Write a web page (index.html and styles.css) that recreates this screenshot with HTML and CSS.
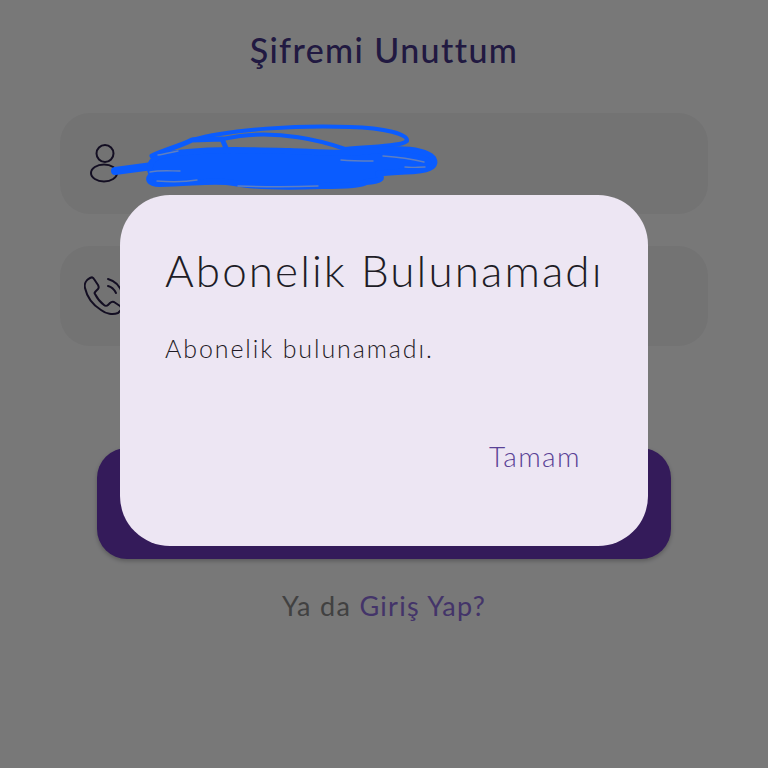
FILE: index.html
```html
<!DOCTYPE html>
<html lang="tr">
<head>
<meta charset="utf-8">
<title>Şifremi Unuttum</title>
<link rel="stylesheet" href="styles.css">
</head>
<body>
<main class="screen">
  <h1 class="heading">Şifremi Unuttum</h1>
  <div class="field field-first">
    <svg class="icon" viewBox="0 0 32 42" fill="none" stroke="#2a1f4a" stroke-width="2">
      <ellipse cx="15" cy="10.5" rx="8.5" ry="8.5"/>
      <ellipse cx="14" cy="30" rx="13" ry="8.5"/>
    </svg>
  </div>
  <div class="field field-second">
    <svg class="icon icon-phone" viewBox="0 0 40 42" fill="none" stroke="#2a1f4a" stroke-width="2" stroke-linecap="round" stroke-linejoin="round">
      <path d="M6 3 C2 5 0 9 1 13 C3 22 9 30 17 35 C22 39 29 40 34 38 L37 35 C38 33 37 32 36 31 L30 27 C28 26 27 27 26 28 L24 30 C23 31 21 31 20 30 C16 27 13 23 11 19 C10 18 11 17 12 16 L14 14 C15 13 15 12 14 10 L10 4 C9 2 8 2 6 3 Z"/>
      <path d="M24 4 C31 6 36 11 38 18"/>
      <path d="M24 11 C28 12 30 14 32 18"/>
    </svg>
  </div>
  <button class="submit" type="button"></button>
  <p class="switch">Ya da <a class="switch-link">Giriş Yap?</a></p>
  <div class="scrim"></div>
  <svg class="scribble" viewBox="100 120 350 75" fill="none" stroke-linecap="round" stroke-linejoin="round">
    <path class="ink" stroke-width="8" d="M115 171 L190 161"/>
    <path class="ink" stroke-width="4" d="M192 140 C230 129 300 125 350 127 C385 128 408 134 407 141 C400 147 370 146 345 149 C320 140 280 131 240 136 L222 139"/>
    <path class="ink" stroke-width="5" d="M152 156 C165 150 180 146 192 140 L222 139 L226 148"/>
    <path class="ink-fill" d="M188 152 C215 149 250 150 290 151 C320 152 345 155 380 150 C405 148 425 150 433 158 C437 165 432 170 415 171 C400 172 385 172 378 174 C384 178 381 181 366 182 C362 185 345 186 322 186 C295 187 255 187 234 183 C215 179 190 184 160 184 C148 184 147 178 152 175 C148 168 150 162 156 158 C165 153 178 153 188 152 Z"/>
    <path class="gap" stroke-width="1.4" d="M341 160 C352 161 362 161 373 161 M383 156 C398 157 412 159 424 162 M405 167 C412 168 418 167 425 167 M158 155 C165 154 172 152 178 151 M150 172 C160 170 170 171 180 171 M157 181 C170 182 185 182 197 180 M238 186 C265 187 295 187 318 186"/>
  </svg>
  <section class="dialog">
    <h2 class="dialog-title">Abonelik Bulunamadı</h2>
    <p class="dialog-text">Abonelik bulunamadı.</p>
    <div class="dialog-actions"><button class="dialog-ok" type="button">Tamam</button></div>
  </section>
</main>
</body>
</html>
```
FILE: styles.css
```css
* { box-sizing: border-box; }
html, body { margin: 0; height: 100%; }
body { background: #777777; font-family: "Lato", "Noto Sans", sans-serif; }
.screen {
  position: relative;
  width: 768px;
  height: 768px;
  overflow: hidden;
  display: flex;
  flex-direction: column;
  align-items: center;
  background: #fefeff;
}
.heading {
  margin: 26px 0 0;
  height: 48px;
  font-size: 34px;
  line-height: 48px;
  font-weight: 500;
  letter-spacing: 1.4px;
  color: #46368a;
}
.field {
  width: 648px;
  height: 101px;
  border-radius: 30px;
  background: #f4f4f4;
  display: flex;
  align-items: center;
  padding-left: 30px;
}
.field-first { margin-top: 39px; }
.field-second { margin-top: 32px; height: 100px; padding-left: 24px; }
.icon { width: 32px; height: 42px; }
.icon-phone { width: 40px; height: 42px; }
.submit {
  margin-top: 102px;
  width: 574px;
  height: 111px;
  border: 0;
  border-radius: 30px;
  background: #6f3ac0;
  box-shadow: 0 2px 4px rgba(0,0,0,0.25);
}
.switch {
  margin: 31px 0 0;
  font-size: 27px;
  line-height: 32px;
  letter-spacing: 1.3px;
  color: #8a8a8a;
}
.switch-link { color: #8f6fe0; }
.scrim { position: absolute; inset: 0; background: rgba(0,0,0,0.53); }
.scribble { position: absolute; left: 100px; top: 120px; width: 350px; height: 75px; }
.ink { stroke: #0a5cff; }
.ink-fill { fill: #0a5cff; stroke: #0a5cff; stroke-width: 6; }
.gap { stroke: #5f7fc0; }
.dialog {
  position: absolute;
  left: 120px;
  top: 195px;
  width: 528px;
  height: 351px;
  border-radius: 50px;
  background: #ede6f3;
  padding: 48px 45px 0;
}
.dialog-title {
  margin: 0;
  font-size: 44px;
  line-height: 54px;
  font-weight: 300;
  letter-spacing: 2.1px;
  color: #201c26;
  white-space: nowrap;
}
.dialog-text {
  margin: 35px 0 0;
  font-size: 25px;
  line-height: 32px;
  font-weight: 300;
  letter-spacing: 1.9px;
  color: #1f1a25;
}
.dialog-actions {
  display: flex;
  justify-content: flex-end;
  margin-top: 75px;
  margin-right: 22px;
}
.dialog-ok {
  padding: 0;
  border: 0;
  background: none;
  font: 300 28px/34px "Lato", "Noto Sans", sans-serif;
  letter-spacing: 1.4px;
  color: #5a4296;
}
```
